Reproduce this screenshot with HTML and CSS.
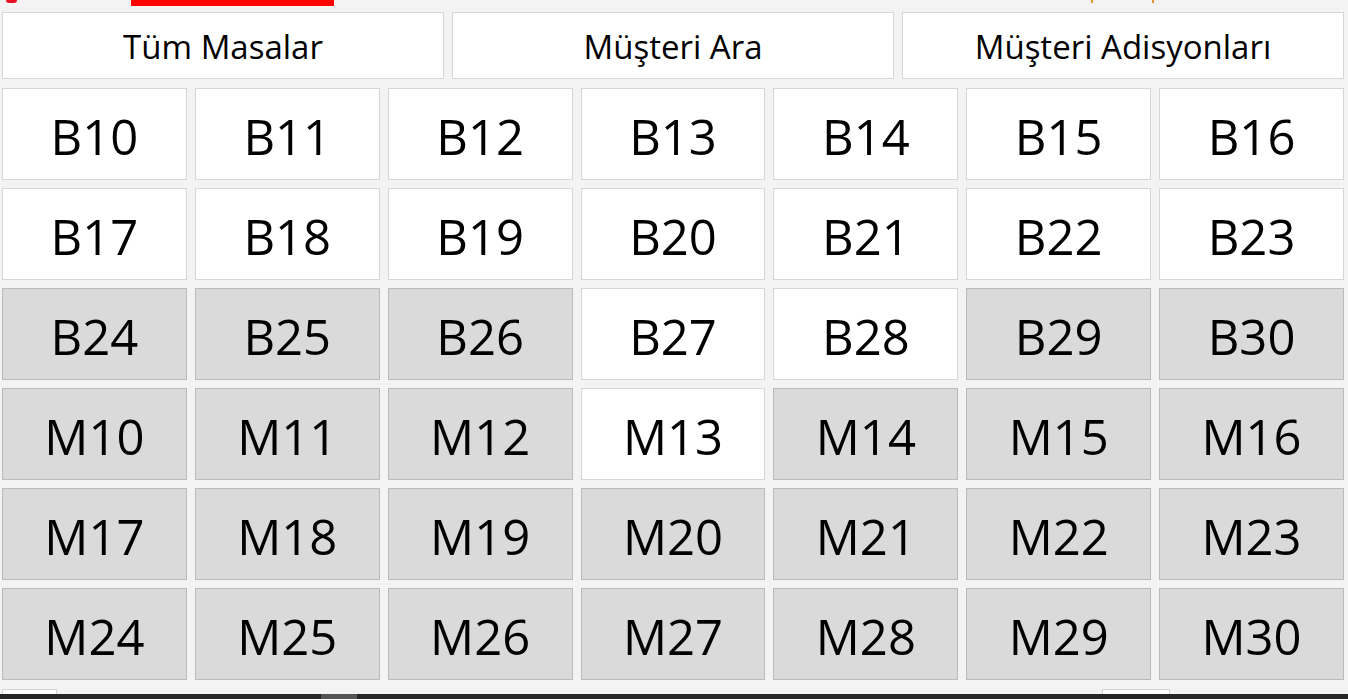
FILE: index.html
```html
<!DOCTYPE html>
<html lang="tr">
<head>
    <meta charset="UTF-8">
    <meta name="viewport" content="width=device-width, initial-scale=1.0">
    <title>Masalar</title>
    <link rel="stylesheet" href="styles.css">
</head>
<body>
    <div class="top-strip">
        <span class="logo-dot"></span>
        <span class="alert-bar"></span>
        <span class="tick tick-a"></span>
        <span class="tick tick-b"></span>
    </div>

    <div class="tabs">
        <button class="tab">Tüm Masalar</button>
        <button class="tab">Müşteri Ara</button>
        <button class="tab">Müşteri Adisyonları</button>
    </div>

    <div class="tables" id="tables"></div>

    <div class="bottom-strip">
        <span class="stub stub-left"></span>
        <span class="stub stub-right"></span>
    </div>
    <div class="scroll-bar">
        <span class="thumb"></span>
    </div>

    <script>
        // masa listesi: dolu olanlar gri gösterilir
        const busy = ['B24', 'B25', 'B26', 'B29', 'B30',
            'M10', 'M11', 'M12', 'M14', 'M15', 'M16',
            'M17', 'M18', 'M19', 'M20', 'M21', 'M22', 'M23',
            'M24', 'M25', 'M26', 'M27', 'M28', 'M29', 'M30'];
        const names = [];
        for (let i = 10; i <= 30; i++) names.push('B' + i);
        for (let i = 10; i <= 30; i++) names.push('M' + i);

        const list = document.getElementById('tables');
        names.forEach(name => {
            const btn = document.createElement('button');
            btn.className = 'table' + (busy.includes(name) ? ' busy' : '');
            btn.textContent = name;
            list.appendChild(btn);
        });
    </script>
</body>
</html>
```

FILE: styles.css
```css
body {
    font-family: 'Open Sans', 'Noto Sans', sans-serif;
    background-color: #f3f3f3;
    color: #000;
    margin: 0;
    padding: 0;
    overflow: hidden;
}
button {
    font-family: inherit;
    color: #000;
    cursor: pointer;
}
.top-strip {
    height: 12px;
    display: flex;
    align-items: flex-start;
}
.logo-dot {
    width: 11px;
    height: 3px;
    margin-left: 6px;
    background-color: #e81123;
    border-radius: 0 0 6px 6px;
}
.alert-bar {
    width: 203px;
    height: 6px;
    margin-left: 114px;
    background-color: #ff0000;
}
.tick {
    width: 2px;
    height: 3px;
    background-color: #e0962e;
}
.tick-a {
    margin-left: 757px;
}
.tick-b {
    margin-left: 59px;
}
.tabs {
    display: grid;
    grid-template-columns: repeat(3, 1fr);
    column-gap: 8px;
    padding: 0 4px 0 2px;
}
.tab {
    height: 67px;
    background-color: #fff;
    border: 1px solid #d6d6d6;
    font-size: 33px;
    padding: 2px 0 0;
}
.tables {
    display: grid;
    grid-template-columns: repeat(7, 1fr);
    grid-auto-rows: 92px;
    gap: 8px;
    padding: 9px 4px 0 2px;
}
.table {
    background-color: #fff;
    border: 1px solid #d6d6d6;
    font-size: 49px;
    padding: 4px 0 0;
}
.table.busy {
    background-color: #dadada;
    border-color: #bababa;
}
.bottom-strip {
    height: 14px;
    display: flex;
    align-items: flex-end;
}
.stub {
    height: 4px;
    background-color: #fff;
    border: 1px solid #d6d6d6;
    border-bottom: none;
}
.stub-left {
    width: 53px;
    margin-left: 2px;
}
.stub-right {
    width: 66px;
    margin-left: 1045px;
}
.scroll-bar {
    height: 5px;
    background-color: #262626;
    display: flex;
}
.thumb {
    width: 36px;
    margin-left: 321px;
    background-color: #555;
}
```
